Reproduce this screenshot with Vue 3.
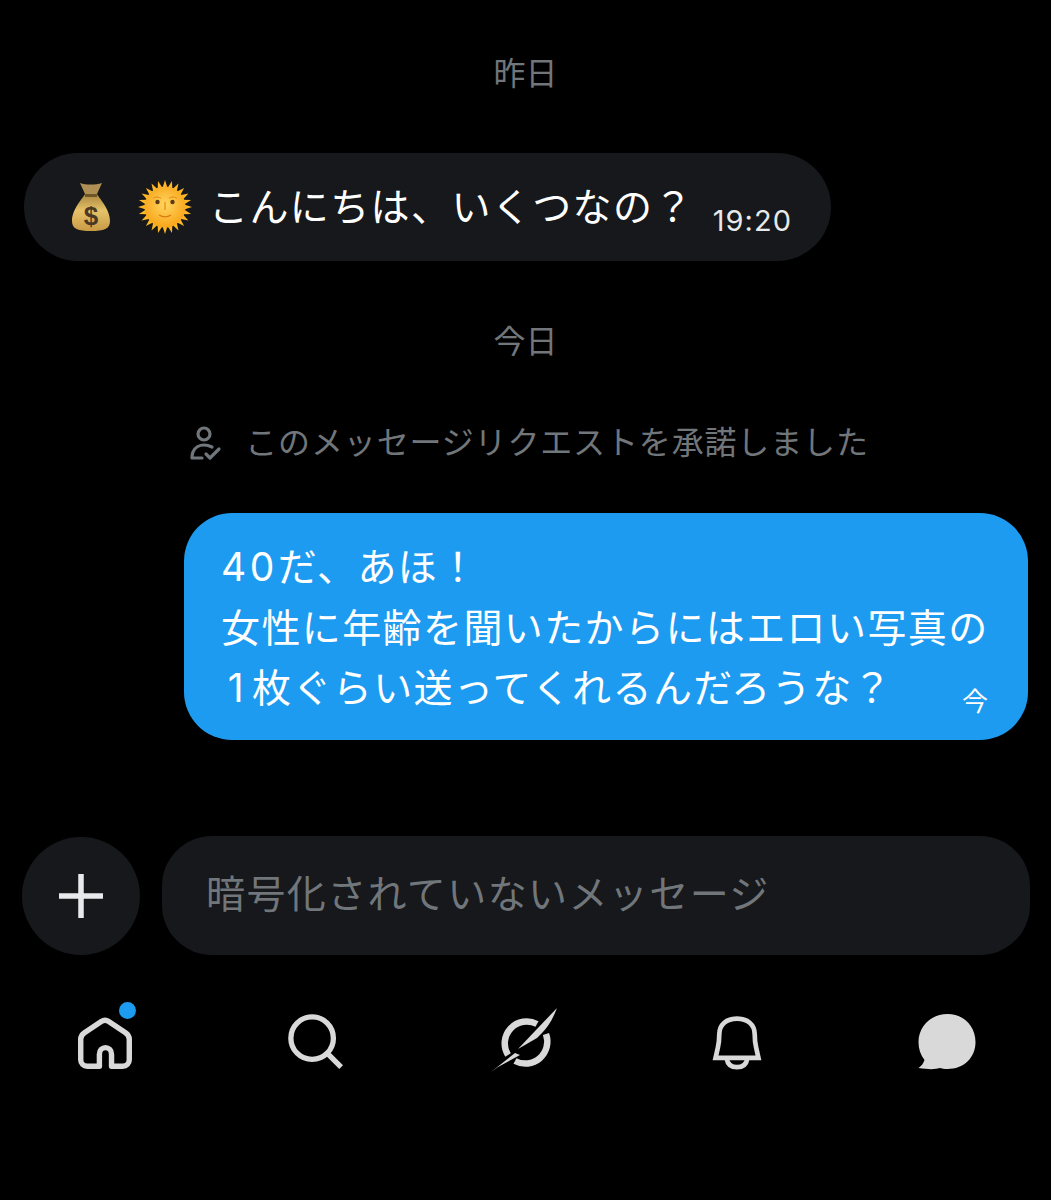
<template>
  <div class="screen">
    <section class="thread">
      <div class="date date-yesterday">昨日</div>

      <div class="bubble-in">
        <svg class="emoji bag" viewBox="0 0 40 50">
          <defs>
            <linearGradient id="bagFill" x1="0" y1="0" x2="0" y2="1">
              <stop offset="0" stop-color="#a8863f" />
              <stop offset="0.45" stop-color="#e6c269" />
              <stop offset="1" stop-color="#c99a45" />
            </linearGradient>
          </defs>
          <path d="M9 1c6 2 15 2 22 0l-5 11H14z" fill="#b08f55" />
          <path d="M14 12h12c2 4 13 15 13 27 0 8-6 10-19 10S1 47 1 39c0-12 11-23 13-27z" fill="url(#bagFill)" />
          <path d="M14 12h12v3H14z" fill="#6f5426" />
          <text x="20" y="43" text-anchor="middle" class="dollar">$</text>
        </svg>
        <svg class="emoji sun" viewBox="0 0 54 54">
          <defs>
            <radialGradient id="sunFill" cx="0.5" cy="0.45" r="0.55">
              <stop offset="0" stop-color="#ffd660" />
              <stop offset="1" stop-color="#f9a51a" />
            </radialGradient>
          </defs>
          <g fill="#fdb827">
            <polygon
              v-for="a in rays"
              :key="a"
              points="24.500,8 27,0 29.500,8"
              :transform="`rotate(${a} 27 27)`"
            />
          </g>
          <circle cx="27" cy="27" r="20.500" fill="url(#sunFill)" />
          <circle cx="19.500" cy="22" r="2.200" fill="#5b3a1a" />
          <circle cx="34.500" cy="22" r="2.200" fill="#5b3a1a" />
          <path d="M15 18.500c2-2 6-2 8 0M31 18.500c2-2 6-2 8 0" stroke="#e58a17" stroke-width="1" fill="none" />
          <path d="M27 22v8" stroke="#ea9318" stroke-width="1.400" />
          <path d="M21 35c4 2.500 8 2.500 12 0" stroke="#d97a12" stroke-width="1.400" fill="none" />
        </svg>
        <span class="in-text">こんにちは、いくつなの？</span>
        <span class="in-time">19:20</span>
      </div>

      <div class="date date-today">今日</div>

      <div class="system">
        <svg class="system-icon" viewBox="0 0 32 36" fill="none" stroke="#71767b" stroke-width="3.200">
          <circle cx="14" cy="9" r="6" />
          <path d="M2 33c0-2 0-4 1-6 2-5 7-7 11-7 3 0 6 1 8 2M2 33h10" stroke-linecap="round" />
          <path d="M16 29l4 4 9-9" stroke-linecap="round" stroke-linejoin="round" />
        </svg>
        <span>このメッセージリクエストを承諾しました</span>
      </div>

      <div class="bubble-row">
        <div class="bubble-out">
          <p><span class="forty">40</span>だ、あほ！</p>
          <p>女性に年齢を聞いたからにはエロい写真の</p>
          <div class="last-line">
            <p><span class="one">1</span>枚ぐらい送ってくれるんだろうな？</p>
            <span class="out-time">今</span>
          </div>
        </div>
      </div>
    </section>

    <section class="composer">
      <button class="add" aria-label="追加">
        <svg viewBox="0 0 46 46" width="46" height="46">
          <path d="M23 1v44M1 23h44" stroke="#e7e9ea" stroke-width="5.500" />
        </svg>
      </button>
      <div class="field">暗号化されていないメッセージ</div>
    </section>

    <nav class="tabs">
      <div class="tab">
        <svg width="56" height="56" viewBox="0 0 60 60" fill="none" stroke="#d9d9d9" stroke-width="5.800">
          <path d="M24 56H11c-4 0-7-3-7-7V27c0-3 1-5 4-7L26 8c3-2 5-2 8 0l18 12c3 2 4 4 4 7v22c0 4-3 7-7 7H37V43c0-4-3-7-6.500-7S24 39 24 43z" stroke-linejoin="round" />
        </svg>
        <span class="dot"></span>
      </div>
      <div class="tab">
        <svg width="58" height="58" viewBox="1 0 60 60" fill="none" stroke="#d9d9d9" stroke-width="5.500">
          <circle cx="27" cy="26" r="22" />
          <path d="M43 42l14 14" />
        </svg>
      </div>
      <div class="tab">
        <svg width="70" height="70" viewBox="1 1 70 70">
          <path d="M47 18A22 22 0 0 0 18 49" fill="none" stroke="#d9d9d9" stroke-width="6.500" />
          <path d="M25 55A22 22 0 0 0 56 28" fill="none" stroke="#d9d9d9" stroke-width="6.500" />
          <path d="M67 2C63 12 59 20 52 27L47 32 28 43 46 24z" fill="#d9d9d9" />
          <path d="M1 66 25 47 30 49 8 61z" fill="#d9d9d9" />
        </svg>
      </div>
      <div class="tab">
        <svg width="56" height="56" viewBox="0 0 60 60" fill="none" stroke="#d9d9d9" stroke-width="5">
          <path d="M7 47h46l-2.500-11c-1-4-1.500-8-1.500-14C49 11 41 5 30 5S11 11 11 22c0 6-.5 10-1.500 14z" />
          <path d="M19 48c1 6 5 9 11 9s10-3 11-9" />
        </svg>
      </div>
      <div class="tab">
        <svg width="61" height="60" viewBox="1 0 60 60">
          <path d="M31 2c16 0 28 12 28 28S47 57 31 57c-3 0-6-.5-8-1-4 1.500-11 1.500-21 0 3-2 5-5 6-8C4 43 2 37 2 30 2 14 15 2 31 2z" fill="#d9d9d9" />
        </svg>
      </div>
    </nav>
  </div>
</template>

<script setup>
const rays = Array.from({ length: 24 }, (_, i) => i * 15)
</script>

<style>
html,
body {
  margin: 0;
  background: #000;
}
</style>

<style scoped>
.screen {
  height: 1200px;
  overflow: hidden;
  background: #000;
  color: #e7e9ea;
  font-family: "Inter", "Noto Sans CJK JP", sans-serif;
}

.thread {
  padding: 0 24px;
}

.date {
  color: #71767b;
  font-size: 32px;
  line-height: 40px;
  text-align: center;
}

.date-yesterday {
  padding-top: 54px;
}

.date-today {
  margin-top: 61px;
}

.bubble-in {
  display: flex;
  align-items: center;
  width: 807px;
  height: 108px;
  margin-top: 59px;
  box-sizing: border-box;
  padding-left: 47px;
  border-radius: 54px;
  background: #16181b;
}

.emoji {
  flex: none;
}

.bag {
  width: 40px;
  height: 50px;
}

.sun {
  width: 54px;
  height: 54px;
  margin-left: 27px;
}

.in-text {
  margin-left: 17px;
  color: #fff;
  font-size: 39px;
  letter-spacing: 1.400px;
  line-height: 50px;
  white-space: nowrap;
}

.in-time {
  margin-left: 19px;
  padding-top: 28px;
  color: #e7e9ea;
  font-size: 29px;
  letter-spacing: 1px;
  line-height: 36px;
}

.system {
  display: flex;
  align-items: center;
  justify-content: center;
  gap: 23px;
  margin-top: 60px;
  padding-left: 8px;
  color: #71767b;
  font-size: 32px;
  letter-spacing: 0.850px;
  line-height: 42px;
  white-space: nowrap;
}

.system-icon {
  width: 32px;
  height: 36px;
}

.bubble-row {
  display: flex;
  justify-content: flex-end;
  margin-top: 49px;
  margin-right: -1px;
}

.bubble-out {
  width: 844px;
  height: 227px;
  box-sizing: border-box;
  padding: 24px 40px 0 37px;
  border-radius: 48px;
  background: #1d9bf0;
  color: #fff;
  font-size: 39px;
  letter-spacing: 1.400px;
  line-height: 60.500px;
  white-space: nowrap;
}

.bubble-out p {
  margin: 0;
}

.forty {
  letter-spacing: 3.500px;
}

.one {
  display: inline-block;
  width: 31px;
  text-align: center;
}

.last-line {
  display: flex;
  justify-content: space-between;
  align-items: flex-end;
}

.out-time {
  margin-right: 0;
  margin-bottom: -3px;
  font-size: 26px;
  letter-spacing: 0;
  line-height: 40px;
}

.composer {
  display: flex;
  align-items: center;
  gap: 22px;
  margin-top: 96px;
  padding: 0 21px 0 22px;
}

.add {
  display: flex;
  align-items: center;
  justify-content: center;
  flex: none;
  width: 118px;
  height: 118px;
  padding: 0;
  border: 0;
  border-radius: 50%;
  background: #16181b;
}

.field {
  flex: 1;
  height: 119px;
  box-sizing: border-box;
  padding-left: 44px;
  border-radius: 50px;
  background: #16181b;
  color: #71767b;
  font-size: 39px;
  letter-spacing: 1.400px;
  line-height: 116px;
  white-space: nowrap;
}

.tabs {
  display: grid;
  grid-template-columns: repeat(5, 210.500px);
  justify-content: start;
  margin-top: 50px;
}

.tab {
  position: relative;
  display: flex;
  align-items: center;
  justify-content: center;
  height: 74px;
}

.dot {
  position: absolute;
  top: -3px;
  left: 119px;
  width: 17px;
  height: 17px;
  border-radius: 50%;
  background: #1d9bf0;
}

.dollar {
  fill: #4a3a24;
  font-family: "Liberation Sans", sans-serif;
  font-size: 26px;
  font-weight: 700;
}
</style>
